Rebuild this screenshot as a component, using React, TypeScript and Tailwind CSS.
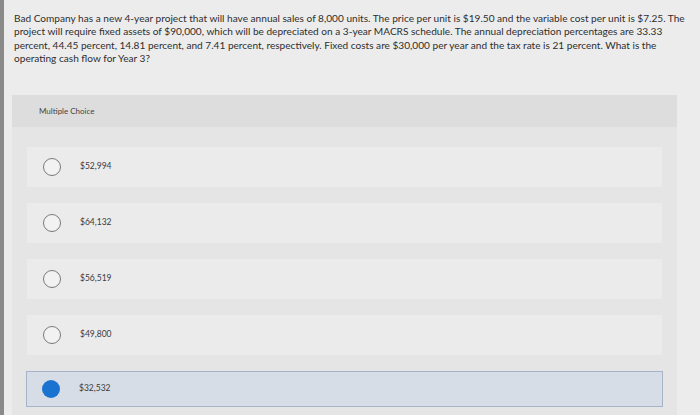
import React from "react";

const options = ["$52,994", "$64,132", "$56,519", "$49,800", "$32,532"];

export default function App() {
  return (
    <div className="w-[700px] h-[415px] overflow-hidden flex bg-[#ececec]" style={{ fontFamily: "Lato, 'Open Sans', sans-serif" }}>
      <div className="w-[4px] h-full shrink-0 bg-[#8a8a8a]" />
      <div className="flex-1 min-w-0 flex flex-col">
        <div className="pl-[10px] pt-[12px] text-[10.1px] leading-[13.4px] text-[#2e2e2e] tracking-[0px] whitespace-nowrap">
          Bad Company has a new 4-year project that will have annual sales of 8,000 units. The price per unit is $19.50 and the variable cost per unit is $7.25. The
          <br />
          project will require fixed assets of $90,000, which will be depreciated on a 3-year MACRS schedule. The annual depreciation percentages are 33.33
          <br />
          percent, 44.45 percent, 14.81 percent, and 7.41 percent, respectively. Fixed costs are $30,000 per year and the tax rate is 21 percent. What is the
          <br />
          operating cash flow for Year 3?
        </div>
        <div className="ml-[8px] w-[665px] mt-[29px] flex-1 bg-[#e5e5e5] flex flex-col">
          <div className="h-[32px] bg-[#dddddd] flex items-center pl-[27px] text-[8px] text-[#444]">
            Multiple Choice
          </div>
          <div className="flex flex-col gap-[16px] pt-[20px] px-[15px]">
            {options.map((o, i) => {
              const sel = i === 4;
              return (
                <div
                  key={o}
                  className={
                    sel
                      ? "h-[36px] flex items-center bg-[#d6dde7] border border-[#a7b3c6] -mx-[1px] pl-[15px]"
                      : "h-[40px] flex items-center bg-[#ebebeb] pl-[16px]"
                  }
                >
                  {sel ? (
                    <div className="w-[18px] h-[18px] rounded-full bg-[#1a73d1]" />
                  ) : (
                    <div className="w-[18px] h-[18px] rounded-full border border-[#7a7a7a] bg-[#f2f2f2]" />
                  )}
                  <div className="ml-[19px] text-[8.5px] text-[#3a3a3a]">{o}</div>
                </div>
              );
            })}
          </div>
        </div>
      </div>
    </div>
  );
}
